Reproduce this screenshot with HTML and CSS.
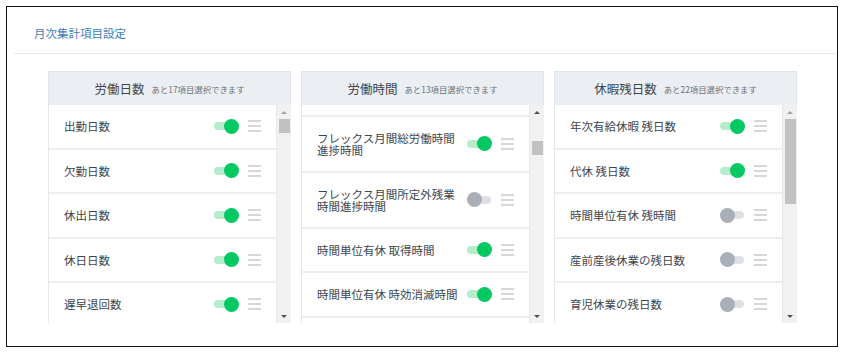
FILE: index.html
```html
<!DOCTYPE html>
<html lang="ja">
<head>
  <meta charset="UTF-8" />
  <meta name="viewport" content="width=device-width, initial-scale=1.0"/>
  <title>月次集計項目設定</title>
  <link rel="stylesheet" href="styles.css">
</head>
<body>

  <div class="panel">
    <h2 class="panel-title">月次集計項目設定</h2>

    <div class="columns">

      <!-- 労働日数 -->
      <section class="column">
        <div class="column-head"><span class="head-name">労働日数</span><small>あと17項目選択できます</small></div>
        <div class="column-body">
          <ul class="items">
            <li class="item"><span class="label">出勤日数</span><span class="toggle on"></span><svg class="handle" width="13" height="12" viewBox="0 0 13 12"><path d="M0 1h13M0 6h13M0 11h13"/></svg></li>
            <li class="item"><span class="label">欠勤日数</span><span class="toggle on"></span><svg class="handle" width="13" height="12" viewBox="0 0 13 12"><path d="M0 1h13M0 6h13M0 11h13"/></svg></li>
            <li class="item"><span class="label">休出日数</span><span class="toggle on"></span><svg class="handle" width="13" height="12" viewBox="0 0 13 12"><path d="M0 1h13M0 6h13M0 11h13"/></svg></li>
            <li class="item"><span class="label">休日日数</span><span class="toggle on"></span><svg class="handle" width="13" height="12" viewBox="0 0 13 12"><path d="M0 1h13M0 6h13M0 11h13"/></svg></li>
            <li class="item"><span class="label">遅早退回数</span><span class="toggle on"></span><svg class="handle" width="13" height="12" viewBox="0 0 13 12"><path d="M0 1h13M0 6h13M0 11h13"/></svg></li>
          </ul>
          <div class="scrollbar">
            <span class="arrow up"></span>
            <div class="track"><span class="thumb" style="margin-top:0;height:14px"></span></div>
            <span class="arrow down"></span>
          </div>
        </div>
      </section>

      <!-- 労働時間 -->
      <section class="column">
        <div class="column-head"><span class="head-name">労働時間</span><small>あと13項目選択できます</small></div>
        <div class="column-body">
          <ul class="items">
            <li class="item peek"></li>
            <li class="item tall"><span class="label">フレックス月間総労働時間<br>進捗時間</span><span class="toggle on"></span><svg class="handle" width="13" height="12" viewBox="0 0 13 12"><path d="M0 1h13M0 6h13M0 11h13"/></svg></li>
            <li class="item tall"><span class="label">フレックス月間所定外残業<br>時間進捗時間</span><span class="toggle"></span><svg class="handle" width="13" height="12" viewBox="0 0 13 12"><path d="M0 1h13M0 6h13M0 11h13"/></svg></li>
            <li class="item"><span class="label">時間単位有休 取得時間</span><span class="toggle on"></span><svg class="handle" width="13" height="12" viewBox="0 0 13 12"><path d="M0 1h13M0 6h13M0 11h13"/></svg></li>
            <li class="item"><span class="label">時間単位有休 時効消滅時間</span><span class="toggle on"></span><svg class="handle" width="13" height="12" viewBox="0 0 13 12"><path d="M0 1h13M0 6h13M0 11h13"/></svg></li>
          </ul>
          <div class="scrollbar">
            <span class="arrow up active"></span>
            <div class="track"><span class="thumb" style="margin-top:22px;height:14px"></span></div>
            <span class="arrow down"></span>
          </div>
        </div>
      </section>

      <!-- 休暇残日数 -->
      <section class="column">
        <div class="column-head"><span class="head-name">休暇残日数</span><small>あと22項目選択できます</small></div>
        <div class="column-body">
          <ul class="items">
            <li class="item"><span class="label">年次有給休暇 残日数</span><span class="toggle on"></span><svg class="handle" width="13" height="12" viewBox="0 0 13 12"><path d="M0 1h13M0 6h13M0 11h13"/></svg></li>
            <li class="item"><span class="label">代休 残日数</span><span class="toggle on"></span><svg class="handle" width="13" height="12" viewBox="0 0 13 12"><path d="M0 1h13M0 6h13M0 11h13"/></svg></li>
            <li class="item"><span class="label">時間単位有休 残時間</span><span class="toggle"></span><svg class="handle" width="13" height="12" viewBox="0 0 13 12"><path d="M0 1h13M0 6h13M0 11h13"/></svg></li>
            <li class="item"><span class="label">産前産後休業の残日数</span><span class="toggle"></span><svg class="handle" width="13" height="12" viewBox="0 0 13 12"><path d="M0 1h13M0 6h13M0 11h13"/></svg></li>
            <li class="item"><span class="label">育児休業の残日数</span><span class="toggle"></span><svg class="handle" width="13" height="12" viewBox="0 0 13 12"><path d="M0 1h13M0 6h13M0 11h13"/></svg></li>
          </ul>
          <div class="scrollbar">
            <span class="arrow up"></span>
            <div class="track"><span class="thumb" style="margin-top:0;height:85px"></span></div>
            <span class="arrow down"></span>
          </div>
        </div>
      </section>

    </div>
  </div>

</body>
</html>
```

FILE: styles.css
```css
body {
  margin: 0;
  background: #fff;
  font-family: "Noto Sans CJK JP", "Noto Sans", sans-serif;
  color: #3d4650;
}
.panel {
  box-sizing: border-box;
  width: 832px;
  height: 341px;
  margin: 6px;
  border: 1px solid #111;
  overflow: hidden;
}
.panel-title {
  margin: 0 1px 0 7px;
  padding: 18px 0 12px 20px;
  font-size: 11.5px;
  font-weight: normal;
  line-height: 16px;
  color: #3b7dbd;
  border-bottom: 1px solid #e3e7ea;
}
.columns {
  display: flex;
  gap: 10px;
  padding: 17px 0 0 41px;
}
.column {
  width: 243px;
  height: 252px;
  display: flex;
  flex-direction: column;
}
.column-head {
  box-sizing: border-box;
  height: 34px;
  display: flex;
  align-items: center;
  justify-content: center;
  font-weight: 400;
  background: #ebeff3;
  border: 1px solid #e0e5ea;
  border-bottom: none;
}
.head-name {
  font-size: 12.5px;
  line-height: 16px;
  color: #40464d;
}
.column-head small {
  margin-left: 7px;
  margin-top: 1px;
  font-size: 8.4px;
  line-height: 12px;
  color: #6b7178;
}
.column-body {
  flex: 1;
  display: flex;
  overflow: hidden;
}
.items {
  flex: 1;
  margin: 0;
  padding: 0;
  list-style: none;
  background: #fff;
  border-left: 1px solid #e4e8ec;
  border-right: 1px solid #e4e8ec;
  overflow: hidden;
}
.item {
  box-sizing: border-box;
  height: 44.5px;
  display: flex;
  align-items: center;
  padding: 0 15px;
  border-bottom: 2px solid #eceff2;
}
.item.peek {
  height: 11.5px;
}
.item.tall {
  height: 56px;
}
.label {
  flex: 1;
  font-size: 11.5px;
  line-height: 12px;
  white-space: nowrap;
}
.toggle {
  position: relative;
  flex: none;
  width: 25px;
  height: 15px;
}
.toggle::before {
  content: "";
  position: absolute;
  left: 0;
  right: 1px;
  top: 3.5px;
  height: 8px;
  border-radius: 4px;
  background: #dde1e6;
}
.toggle::after {
  content: "";
  position: absolute;
  top: 0;
  left: 0;
  width: 15px;
  height: 15px;
  border-radius: 50%;
  background: #a8afb7;
}
.toggle.on::before {
  background: #b5eccc;
}
.toggle.on::after {
  left: auto;
  right: 0;
  background: #04c862;
}
.handle {
  flex: none;
  margin-left: 9px;
  fill: none;
  stroke: #c6cbd0;
  stroke-width: 1.6;
}
.scrollbar {
  width: 14px;
  display: flex;
  flex-direction: column;
  background: #f1f1f1;
}
.track {
  flex: 1;
}
.thumb {
  display: block;
  width: 11px;
  margin-left: 2px;
  background: #c1c1c1;
}
.arrow {
  height: 14px;
  display: flex;
  align-items: center;
  justify-content: center;
}
.arrow::before {
  content: "";
  border-left: 3px solid transparent;
  border-right: 3px solid transparent;
}
.arrow.up::before {
  border-bottom: 3px solid #a3a3a3;
}
.arrow.up.active::before {
  border-bottom-color: #505050;
}
.arrow.down::before {
  border-top: 3px solid #505050;
}
```
